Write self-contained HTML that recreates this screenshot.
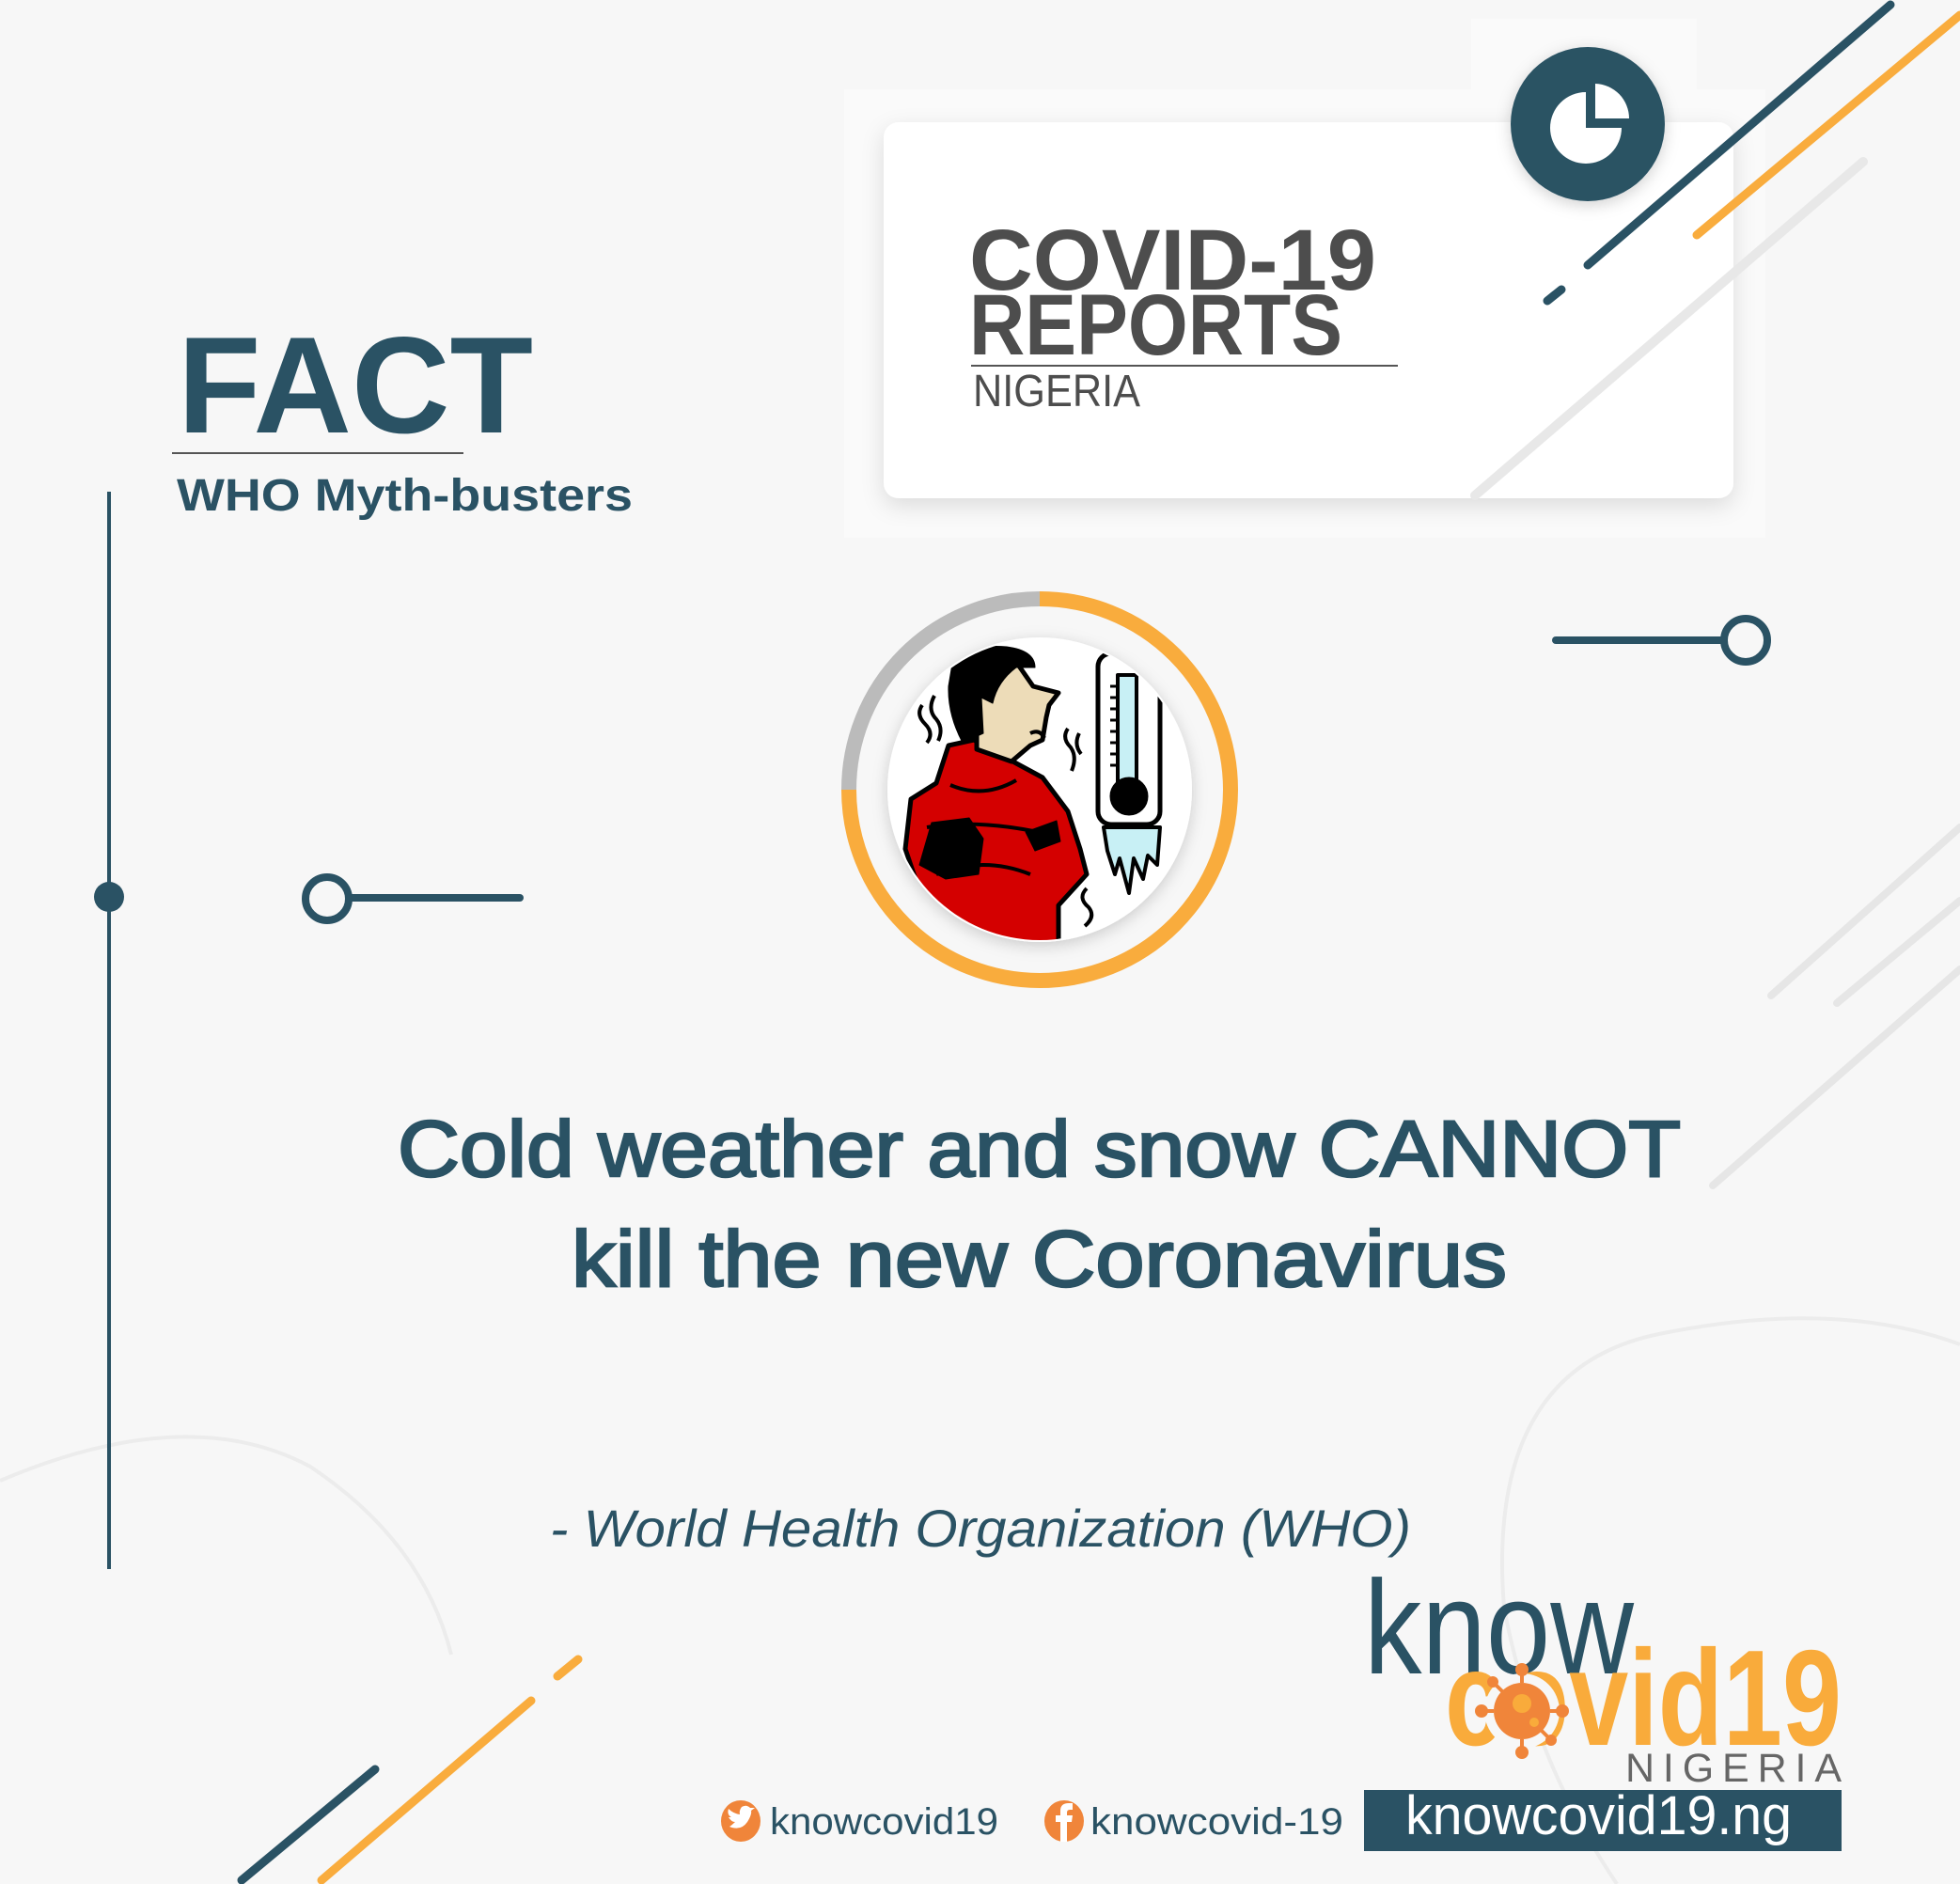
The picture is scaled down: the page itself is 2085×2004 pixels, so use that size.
<!DOCTYPE html>
<html><head><meta charset="utf-8"><style>
html,body{margin:0;padding:0;background:#f7f7f7;}
svg{display:block;}
text{font-family:"Liberation Sans",sans-serif;}
</style></head><body>
<svg width="2085" height="2004" viewBox="0 0 2085 2004" xmlns="http://www.w3.org/2000/svg">
<defs>
<filter id="sh" x="-20%" y="-20%" width="140%" height="140%"><feDropShadow dx="0" dy="8" stdDeviation="12" flood-color="#000" flood-opacity="0.12"/></filter>
<filter id="sh2" x="-30%" y="-30%" width="160%" height="160%"><feDropShadow dx="0" dy="4" stdDeviation="8" flood-color="#000" flood-opacity="0.18"/></filter>
<clipPath id="inner"><circle cx="1106" cy="840" r="160"/></clipPath>
</defs>
<rect width="2085" height="2004" fill="#f7f7f7"/>
<path d="M0 1575 Q200 1490 330 1560 Q450 1640 480 1760" fill="none" stroke="#ececec" stroke-width="4"/>
<path d="M1600 1710 Q1580 1460 1760 1420 Q1950 1380 2085 1430" fill="none" stroke="#ececec" stroke-width="4"/>
<path d="M1600 1710 Q1630 1870 1720 2004" fill="none" stroke="#ececec" stroke-width="4"/>
<rect x="898" y="95" width="980" height="477" fill="#fafafa"/>
<rect x="1565" y="20" width="240" height="90" fill="#fafafa"/>
<rect x="940" y="130" width="904" height="400" rx="16" fill="#fff" filter="url(#sh)"/>
<line x1="1569" y1="527" x2="1982" y2="172" stroke="#e8e8e8" stroke-width="10" stroke-linecap="round"/>
<line x1="1689" y1="282" x2="2011" y2="5" stroke="#2a5264" stroke-width="9" stroke-linecap="round"/>
<line x1="1646" y1="320" x2="1661" y2="308" stroke="#2a5264" stroke-width="9" stroke-linecap="round"/>
<line x1="1805" y1="250" x2="2085" y2="16" stroke="#f9ac3d" stroke-width="9" stroke-linecap="round"/>
<circle cx="1689" cy="132" r="82" fill="#2a5264" filter="url(#sh2)"/>
<path d="M1687 98 A38 38 0 1 0 1725 136 L1687 136 Z" fill="#fff"/>
<path d="M1697 89 A37 37 0 0 1 1733 126 L1697 126 Z" fill="#fff"/>
<text x="1031" y="308" font-size="92" font-weight="bold" fill="#4d4d4d" textLength="433" lengthAdjust="spacingAndGlyphs">COVID-19</text>
<text x="1031" y="377" font-size="92" font-weight="bold" fill="#4d4d4d" textLength="397" lengthAdjust="spacingAndGlyphs">REPORTS</text>
<line x1="1033" y1="389" x2="1487" y2="389" stroke="#555" stroke-width="2"/>
<text x="1035" y="432" font-size="48" fill="#4d4d4d" textLength="178" lengthAdjust="spacingAndGlyphs">NIGERIA</text>
<text x="189" y="460" font-size="146" font-weight="bold" fill="#2a5264" textLength="378" lengthAdjust="spacingAndGlyphs">FACT</text>
<line x1="183" y1="482" x2="493" y2="482" stroke="#555" stroke-width="2"/>
<text x="188" y="543" font-size="48" font-weight="bold" fill="#2a5264" textLength="485" lengthAdjust="spacingAndGlyphs">WHO Myth-busters</text>
<line x1="116" y1="523" x2="116" y2="1669" stroke="#2a5264" stroke-width="4"/>
<circle cx="116" cy="954" r="16" fill="#2a5264"/>
<circle cx="348" cy="956" r="23" fill="none" stroke="#2a5264" stroke-width="8"/>
<line x1="371" y1="955" x2="553" y2="955" stroke="#2a5264" stroke-width="8" stroke-linecap="round"/>
<line x1="1655" y1="681" x2="1834" y2="681" stroke="#2a5264" stroke-width="8" stroke-linecap="round"/>
<circle cx="1857" cy="681" r="23" fill="none" stroke="#2a5264" stroke-width="8"/>
<line x1="1884" y1="1059" x2="2085" y2="880" stroke="#e6e6e6" stroke-width="8" stroke-linecap="round"/>
<line x1="1954" y1="1067" x2="2085" y2="958" stroke="#e6e6e6" stroke-width="8" stroke-linecap="round"/>
<line x1="1822" y1="1261" x2="2085" y2="1031" stroke="#e6e6e6" stroke-width="8" stroke-linecap="round"/>
<path d="M903 840 A203 203 0 0 1 1106 637" fill="none" stroke="#bbbbbb" stroke-width="16"/>
<path d="M1106 637 A203 203 0 1 1 903 840" fill="none" stroke="#f9ac3d" stroke-width="16"/>
<circle cx="1106" cy="840" r="162" fill="#fff" filter="url(#sh2)"/>
<g clip-path="url(#inner)">
<g transform="translate(896,630)" stroke="#000" stroke-linejoin="round">
 <path d="M113 163 L140 157 L187 183 L213 197 L240 233 L253 273 L260 300 L230 333 L230 380 L110 380 L83 320 L67 273 L73 220 L100 203 Z" fill="#d40000" stroke-width="5"/>
 <path d="M100 300 Q150 280 200 300 M90 250 Q150 240 230 260 M115 205 Q150 220 185 200" fill="none" stroke-width="4"/>
 <path d="M95 245 L135 240 L150 262 L145 300 L110 305 L82 290 Z" fill="#000"/>
 <path d="M195 255 L228 243 L232 265 L205 275 Z" fill="#000"/>
 <path d="M143 80 L187 77 L203 100 L230 107 L220 120 L217 133 L213 157 L200 163 L180 180 L143 167 Z" fill="#eddcb8" stroke-width="5"/>
 <path d="M118 70 Q140 55 175 58 Q205 62 205 80 L185 80 Q165 95 160 118 L148 112 L150 150 L128 160 Q112 130 113 100 Z" fill="#000"/>
 <path d="M200 150 Q210 145 215 155" fill="none" stroke-width="4"/>
 <path d="M85 120 Q78 130 88 140 Q98 150 90 160 M98 110 Q90 125 100 135 Q108 145 102 158 M240 145 Q233 155 243 165 Q250 175 244 190 M252 150 Q246 162 254 172 M260 315 Q250 325 262 335 Q270 345 258 355" fill="none" stroke-width="4"/>
 <rect x="272" y="65" width="66" height="182" rx="14" fill="#fff" stroke-width="5"/>
 <rect x="293" y="88" width="20" height="120" fill="#c8f0f5" stroke-width="4"/>
 <circle cx="305" cy="217" r="20" fill="#000"/>
 <path d="M285 100 h8 M285 112 h8 M285 124 h8 M285 136 h8 M285 148 h8 M285 160 h8 M285 172 h8 M285 184 h8" stroke-width="3"/>
 <path d="M278 250 L338 250 L335 290 L325 280 L320 305 L310 283 L305 320 L295 283 L290 300 L282 275 Z" fill="#c8f0f5" stroke-width="4"/>
</g>
</g>
<text x="423" y="1251" font-size="84" fill="#2a5264" stroke="#2a5264" stroke-width="2.5" textLength="1365" lengthAdjust="spacingAndGlyphs">Cold weather and snow CANNOT</text>
<text x="608" y="1368" font-size="84" fill="#2a5264" stroke="#2a5264" stroke-width="2.5" textLength="995" lengthAdjust="spacingAndGlyphs">kill the new Coronavirus</text>
<text x="585" y="1645" font-size="56" font-style="italic" fill="#2a5264" textLength="916" lengthAdjust="spacingAndGlyphs">- World Health Organization (WHO)</text>
<text x="1451" y="1780" font-size="142" fill="#2a5264" textLength="287" lengthAdjust="spacingAndGlyphs">know</text>
<text x="1537" y="1856" font-size="145" font-weight="bold" fill="#f9ab3b" textLength="422" lengthAdjust="spacingAndGlyphs">covid19</text>
<circle cx="1619" cy="1820" r="40" fill="#f7f7f7"/>
<circle cx="1619" cy="1820" r="30" fill="#f0853a"/>
<g stroke="#f0853a" stroke-width="4" fill="#f0853a">
<line x1="1619" y1="1790" x2="1619" y2="1778"/><circle cx="1619" cy="1776" r="5"/>
<line x1="1619" y1="1850" x2="1619" y2="1862"/><circle cx="1619" cy="1864" r="5"/>
<line x1="1589" y1="1820" x2="1578" y2="1820"/><circle cx="1576" cy="1820" r="5"/>
<line x1="1649" y1="1820" x2="1660" y2="1820"/><circle cx="1662" cy="1820" r="5"/>
<line x1="1598" y1="1799" x2="1590" y2="1791"/><circle cx="1588" cy="1789" r="4"/>
<line x1="1640" y1="1841" x2="1648" y2="1849"/><circle cx="1650" cy="1851" r="4"/>
</g>
<circle cx="1619" cy="1812" r="10" fill="#f9ab3b"/>
<circle cx="1632" cy="1832" r="5" fill="#f9ab3b"/>
<text x="1729" y="1895" font-size="43" fill="#666" textLength="230" lengthAdjust="spacing">NIGERIA</text>
<rect x="1451" y="1904" width="508" height="65" fill="#2a5264"/>
<text x="1495" y="1951" font-size="58" fill="#fff" textLength="411" lengthAdjust="spacingAndGlyphs">knowcovid19.ng</text>
<ellipse cx="788" cy="1937" rx="21" ry="22" fill="#f0853a"/>
<path d="M776 1943 Q788 1948 795 1938 Q800 1930 799 1926 L803 1923 L798 1923 Q794 1919 789 1922 Q786 1926 787 1930 Q780 1929 775 1924 Q773 1930 778 1933 L775 1933 Q778 1938 782 1938 Q779 1941 776 1943 Z" fill="#fff"/>
<text x="819" y="1951" font-size="40" fill="#2a5264" textLength="243" lengthAdjust="spacingAndGlyphs">knowcovid19</text>
<ellipse cx="1132" cy="1937" rx="21" ry="22" fill="#f0853a"/>
<path d="M1128 1959 L1128 1938 L1123 1938 L1123 1931 L1128 1931 L1128 1926 Q1128 1918 1137 1918 L1141 1918 L1141 1925 L1138 1925 Q1135 1925 1135 1928 L1135 1931 L1141 1931 L1140 1938 L1135 1938 L1135 1959 Z" fill="#fff"/>
<text x="1160" y="1951" font-size="40" fill="#2a5264" textLength="269" lengthAdjust="spacingAndGlyphs">knowcovid-19</text>
<line x1="257" y1="2000" x2="399" y2="1882" stroke="#2a5264" stroke-width="9" stroke-linecap="round"/>
<line x1="342" y1="2000" x2="565" y2="1809" stroke="#f9ac3d" stroke-width="9" stroke-linecap="round"/>
<line x1="593" y1="1783" x2="615" y2="1765" stroke="#f9ac3d" stroke-width="9" stroke-linecap="round"/>
</svg>
</body></html>
